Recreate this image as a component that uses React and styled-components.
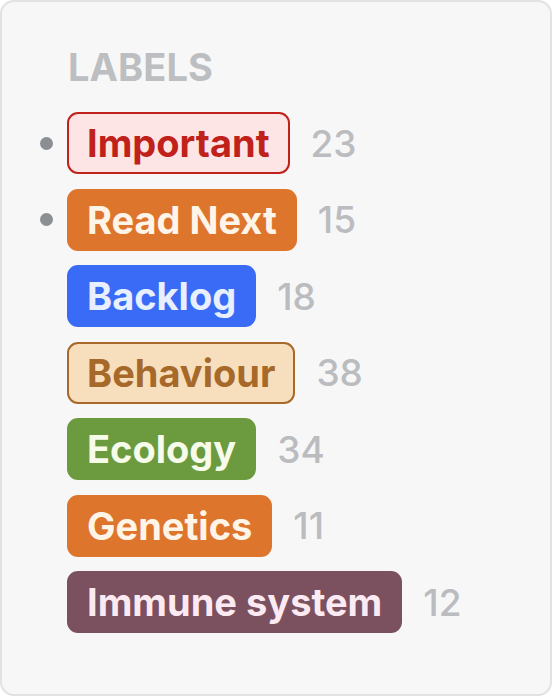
import styled, { createGlobalStyle } from "styled-components";

const GlobalStyle = createGlobalStyle`
  html, body {
    margin: 0;
    padding: 0;
    background: #ffffff;
  }
  body {
    font-family: Inter, "Noto Sans", sans-serif;
  }
`;

const Card = styled.div`
  box-sizing: border-box;
  width: 552px;
  height: 696px;
  background: #f7f7f7;
  border: 2px solid #e2e2e2;
  border-radius: 14px;
  padding: 42px 0 0 38px;
`;

const Heading = styled.h2`
  margin: 0 0 22px 28px;
  font-size: 38px;
  line-height: 46px;
  font-weight: 700;
  color: #bcbec1;
  letter-spacing: 0.1px;
`;

const List = styled.ul`
  list-style: none;
  margin: 0;
  padding: 0;
  display: flex;
  flex-direction: column;
  gap: 14.5px;
`;

const Row = styled.li`
  display: flex;
  align-items: center;
  height: 62px;
`;

const Dot = styled.span`
  width: 13px;
  height: 13px;
  border-radius: 50%;
  background: ${(p) => (p.$visible ? "#8b8e92" : "transparent")};
  margin-right: 14px;
  flex-shrink: 0;
`;

const Chip = styled.span`
  box-sizing: border-box;
  height: 62px;
  display: inline-flex;
  align-items: center;
  padding: 0 18px;
  border-radius: 11px;
  border: 2px solid ${(p) => p.$border};
  background: ${(p) => p.$bg};
  color: ${(p) => p.$fg};
  font-size: 38px;
  font-weight: 700;
  white-space: nowrap;
`;

const Count = styled.span`
  margin-left: 21px;
  font-size: 37px;
  font-weight: 500;
  color: #babcbf;
`;

const labels = [
  { name: "Important", count: 23, dot: true, bg: "#fde5e5", fg: "#c0211b", border: "#c0211b" },
  { name: "Read Next", count: 15, dot: true, bg: "#de752d", fg: "#fff4e8", border: "#de752d" },
  { name: "Backlog", count: 18, bg: "#3a6bf6", fg: "#e8f0ff", border: "#3a6bf6" },
  { name: "Behaviour", count: 38, bg: "#f7dfbd", fg: "#a7692a", border: "#a7692a" },
  { name: "Ecology", count: 34, bg: "#6b9a3f", fg: "#f6fbea", border: "#6b9a3f" },
  { name: "Genetics", count: 11, bg: "#de752d", fg: "#fff4e8", border: "#de752d" },
  { name: "Immune system", count: 12, bg: "#7b505f", fg: "#fceaf2", border: "#7b505f" },
];

const App = () => {
  return (
    <>
      <GlobalStyle />
      <Card>
        <Heading>LABELS</Heading>
        <List>
          {labels.map((l) => (
            <Row key={l.name}>
              <Dot $visible={l.dot} />
              <Chip $bg={l.bg} $fg={l.fg} $border={l.border}>
                {l.name}
              </Chip>
              <Count>{l.count}</Count>
            </Row>
          ))}
        </List>
      </Card>
    </>
  );
};

export default App;
